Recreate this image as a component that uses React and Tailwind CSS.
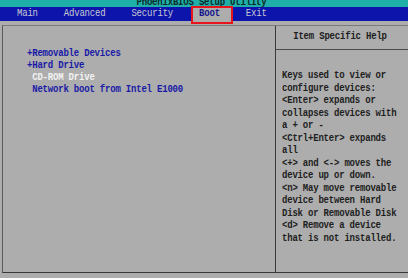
const menu = ['Main', 'Advanced', 'Security', 'Boot', 'Exit'];

const bootItems = [
  { label: '+Removable Devices', color: 'text-[#1a1aa6]' },
  { label: '+Hard Drive', color: 'text-[#1a1aa6]' },
  { label: ' CD-ROM Drive', color: 'text-[#f2f2f2]' },
  { label: ' Network boot from Intel E1000', color: 'text-[#1a1aa6]' },
];

const helpLines = [
  'Keys used to view or',
  'configure devices:',
  '<Enter> expands or',
  'collapses devices with',
  'a + or -',
  '<Ctrl+Enter> expands',
  'all',
  '<+> and <-> moves the',
  'device up or down.',
  '<n> May move removable',
  'device between Hard',
  'Disk or Removable Disk',
  '<d> Remove a device',
  'that is not installed.',
];

// BIOS glyphs are taller than the mono font, stretch them a bit
function T({ children }) {
  return <span className="inline-block scale-y-[1.2] whitespace-pre">{children}</span>;
}

export default function App() {
  return (
    <div className="w-[408px] h-[278px] overflow-hidden flex flex-col bg-[#adadad] font-['Liberation_Mono',monospace] text-[9px] tracking-[-0.2px] font-bold">
      {/* title strip, cut off at the top */}
      <div className="h-[7px] shrink-0 bg-[#1eb0a8] overflow-hidden flex justify-center items-end">
        <span className="leading-[9px] -mb-[1px] pr-[5px] text-[#0c2a2a]">
          <T>PhoenixBIOS Setup Utility</T>
        </span>
      </div>

      {/* menu bar */}
      <div className="h-[14px] shrink-0 bg-[#0c14ac] flex items-center pl-[17px] gap-[26px] leading-[14px] text-[#c8c8d0] font-normal">
        {menu.map((m) =>
          m === 'Boot' ? (
            <span key={m} className="relative -ml-[7px] pl-[7px] pr-[12px] -mr-[12px] bg-[#adadad] text-[#14148c] font-bold">
              <T>{m}</T>
              <span className="absolute -left-[1px] -right-[1px] -top-[1px] -bottom-[3px] border-2 border-[#e8141c]" />
            </span>
          ) : (
            <span key={m}>
              <T>{m}</T>
            </span>
          )
        )}
      </div>

      <div className="h-[4px] shrink-0" />

      {/* frame */}
      <div className="flex h-[248px] ml-[2px] border-l border-t border-b border-l-[#5a5a5a] border-t-[#7a7a7a] border-b-[#3a3a3a]">
        <div className="w-[273px] shrink-0 border-r border-[#3a3a3a] pt-[22px] pl-[24px]">
          {bootItems.map((it) => (
            <div key={it.label} className={`leading-[12px] ${it.color}`}>
              <T>{it.label}</T>
            </div>
          ))}
        </div>
        <div className="flex-1 flex flex-col text-[#1e1e1e]">
          <div className="h-[24px] shrink-0 flex items-center justify-center border-b border-[#4a4a4a] pr-[4px]">
            <T>Item Specific Help</T>
          </div>
          <div className="pt-[20px] pl-[6px]">
            {helpLines.map((l, i) => (
              <div key={i} className="leading-[12.5px]">
                <T>{l}</T>
              </div>
            ))}
          </div>
        </div>
      </div>
    </div>
  );
}
